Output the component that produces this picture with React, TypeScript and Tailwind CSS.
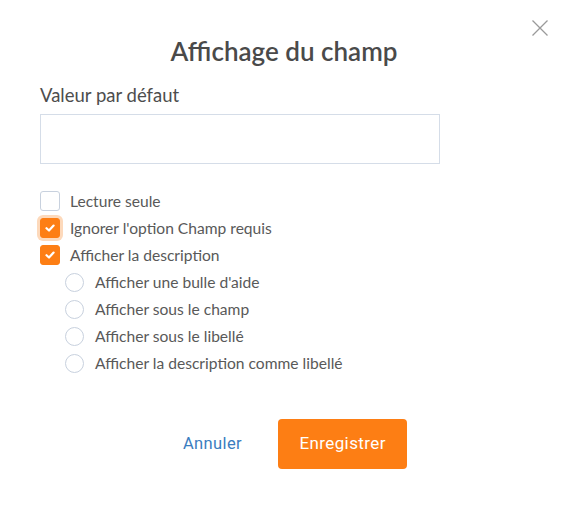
const options = [
  "Afficher une bulle d'aide",
  "Afficher sous le champ",
  "Afficher sous le libellé",
  "Afficher la description comme libellé",
];

function Check({ checked, focus }: { checked?: boolean; focus?: boolean }) {
  return (
    <span
      className={`flex h-[20px] w-[20px] shrink-0 items-center justify-center rounded-[3px] border ${
        checked ? "border-[#fd7e14] bg-[#fd7e14]" : "border-[#c8d1de] bg-white"
      } ${focus ? "ring-[3px] ring-[#fdd9bb]" : ""}`}
    >
      {checked && (
        <svg width="10" height="8" viewBox="0 0 10 8" fill="none">
          <path d="M1.5 4.2 L4 6.5 L8.6 1.6" stroke="white" strokeWidth="2.2" strokeLinecap="round" strokeLinejoin="round" />
        </svg>
      )}
    </span>
  );
}

export default function App() {
  return (
    <div className="relative h-[509px] w-[568px] bg-white font-['Lato',sans-serif] text-[#595959]">
      <button className="absolute right-[20px] top-[20px] text-[#9a9a9a]">
        <svg width="16" height="16" viewBox="0 0 16 16" stroke="currentColor" strokeWidth="1.3">
          <path d="M0.5 0.5 L15.5 15.5 M15.5 0.5 L0.5 15.5" />
        </svg>
      </button>

      <div className="px-[40px] pt-[34px]">
        <h1 className="text-center text-[26px] font-semibold leading-[34px] text-[#4a4a4a]">
          Affichage du champ
        </h1>

        <label className="mt-[15px] block text-[18.5px] leading-[24px] text-[#4d4d4d]">
          Valeur par défaut
        </label>
        <input className="mt-[7px] block h-[50px] w-[400px] border border-[#d5dde8] px-3 outline-none" />

        <div className="mt-[27px] flex flex-col gap-[7px] text-[15.6px] leading-[20px]">
          <div className="flex items-center gap-[10px]">
            <Check />
            <span>Lecture seule</span>
          </div>
          <div className="flex items-center gap-[10px]">
            <Check checked focus />
            <span>Ignorer l'option Champ requis</span>
          </div>
          <div className="flex items-center gap-[10px]">
            <Check checked />
            <span>Afficher la description</span>
          </div>
          {options.map((o) => (
            <div key={o} className="flex items-center gap-[11px] pl-[25px]">
              <span className="h-[19px] w-[19px] shrink-0 rounded-full border border-[#c8d1de] bg-white" />
              <span>{o}</span>
            </div>
          ))}
        </div>

        <div className="mt-[46px] flex items-center justify-center gap-[36px] pl-[22px] font-['Roboto',sans-serif]">
          <button className="text-[16.5px] tracking-[0.4px] text-[#3b7dc0]">Annuler</button>
          <button className="h-[50px] w-[129px] rounded-[4px] bg-[#fd7e14] text-[17px] tracking-[0.4px] text-white">
            Enregistrer
          </button>
        </div>
      </div>
    </div>
  );
}
